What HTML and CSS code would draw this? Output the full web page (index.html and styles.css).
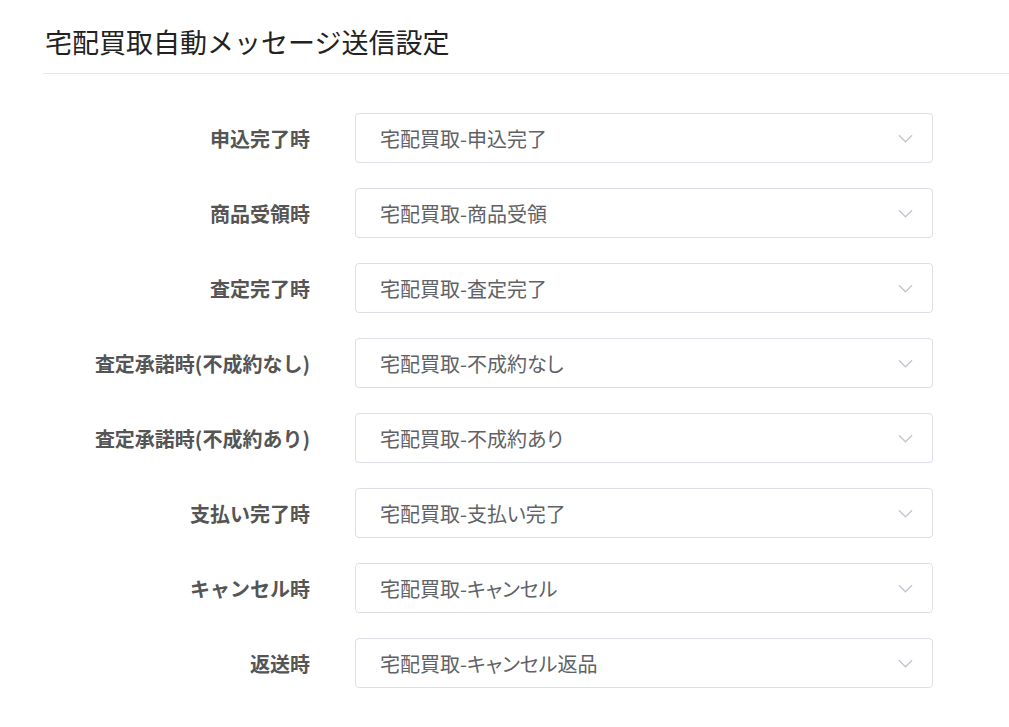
FILE: index.html
```html
<!DOCTYPE html>
<html lang="ja">
<head>
  <meta charset="UTF-8" />
  <title>宅配買取自動メッセージ送信設定</title>
  <meta name="viewport" content="width=device-width, initial-scale=1.0" />
  <link rel="stylesheet" href="styles.css">
</head>
<body>
  <div class="page">
    <div class="page-header">
      <h1 class="page-title">宅配買取自動メッセージ送信設定</h1>
    </div>

    <form class="settings-form">
      <label class="form-label">申込完了時</label>
      <div class="select">
        <span class="select-value">宅配買取-申込完了</span>
        <svg class="select-arrow" viewBox="0 0 16 9"><polyline points="1,1 8,8 15,1" /></svg>
      </div>

      <label class="form-label">商品受領時</label>
      <div class="select">
        <span class="select-value">宅配買取-商品受領</span>
        <svg class="select-arrow" viewBox="0 0 16 9"><polyline points="1,1 8,8 15,1" /></svg>
      </div>

      <label class="form-label">査定完了時</label>
      <div class="select">
        <span class="select-value">宅配買取-査定完了</span>
        <svg class="select-arrow" viewBox="0 0 16 9"><polyline points="1,1 8,8 15,1" /></svg>
      </div>

      <label class="form-label">査定承諾時(不成約なし)</label>
      <div class="select">
        <span class="select-value">宅配買取-不成約なし</span>
        <svg class="select-arrow" viewBox="0 0 16 9"><polyline points="1,1 8,8 15,1" /></svg>
      </div>

      <label class="form-label">査定承諾時(不成約あり)</label>
      <div class="select">
        <span class="select-value">宅配買取-不成約あり</span>
        <svg class="select-arrow" viewBox="0 0 16 9"><polyline points="1,1 8,8 15,1" /></svg>
      </div>

      <label class="form-label">支払い完了時</label>
      <div class="select">
        <span class="select-value">宅配買取-支払い完了</span>
        <svg class="select-arrow" viewBox="0 0 16 9"><polyline points="1,1 8,8 15,1" /></svg>
      </div>

      <label class="form-label">キャンセル時</label>
      <div class="select">
        <span class="select-value">宅配買取-キャンセル</span>
        <svg class="select-arrow" viewBox="0 0 16 9"><polyline points="1,1 8,8 15,1" /></svg>
      </div>

      <label class="form-label">返送時</label>
      <div class="select">
        <span class="select-value">宅配買取-キャンセル返品</span>
        <svg class="select-arrow" viewBox="0 0 16 9"><polyline points="1,1 8,8 15,1" /></svg>
      </div>
    </form>
  </div>
</body>
</html>
```

FILE: styles.css
```css
body {
  margin: 0;
  background-color: #fff;
  font-family: 'Noto Sans CJK JP', 'Noto Sans', sans-serif;
  color: #606266;
}

.page {
  margin-left: 43px;
}

/* заголовок с линией снизу */
.page-header {
  padding-top: 22px;
  padding-bottom: 11px;
  border-bottom: 1px solid #e4e7ed;
}

.page-title {
  margin: 0 0 0 2px;
  font-size: 27px;
  line-height: 40px;
  font-weight: normal;
  color: #222;
}

.settings-form {
  display: grid;
  grid-template-columns: 267px 578px;
  column-gap: 45px;
  row-gap: 25px;
  margin-top: 39px;
}

.form-label {
  display: flex;
  align-items: center;
  justify-content: flex-end;
  font-size: 20px;
  font-weight: bold;
  color: #555;
}

.select {
  height: 50px;
  box-sizing: border-box;
  border: 1px solid #dcdfe6;
  border-radius: 4px;
  padding: 0 19px 0 24px;
  display: flex;
  align-items: center;
  justify-content: space-between;
}

.select-value {
  font-size: 20px;
  color: #606266;
  font-feature-settings: 'palt';
}

.select-arrow {
  width: 15px;
  height: 9px;
  fill: none;
  stroke: #c0c4cc;
  stroke-width: 1.3;
}
```
